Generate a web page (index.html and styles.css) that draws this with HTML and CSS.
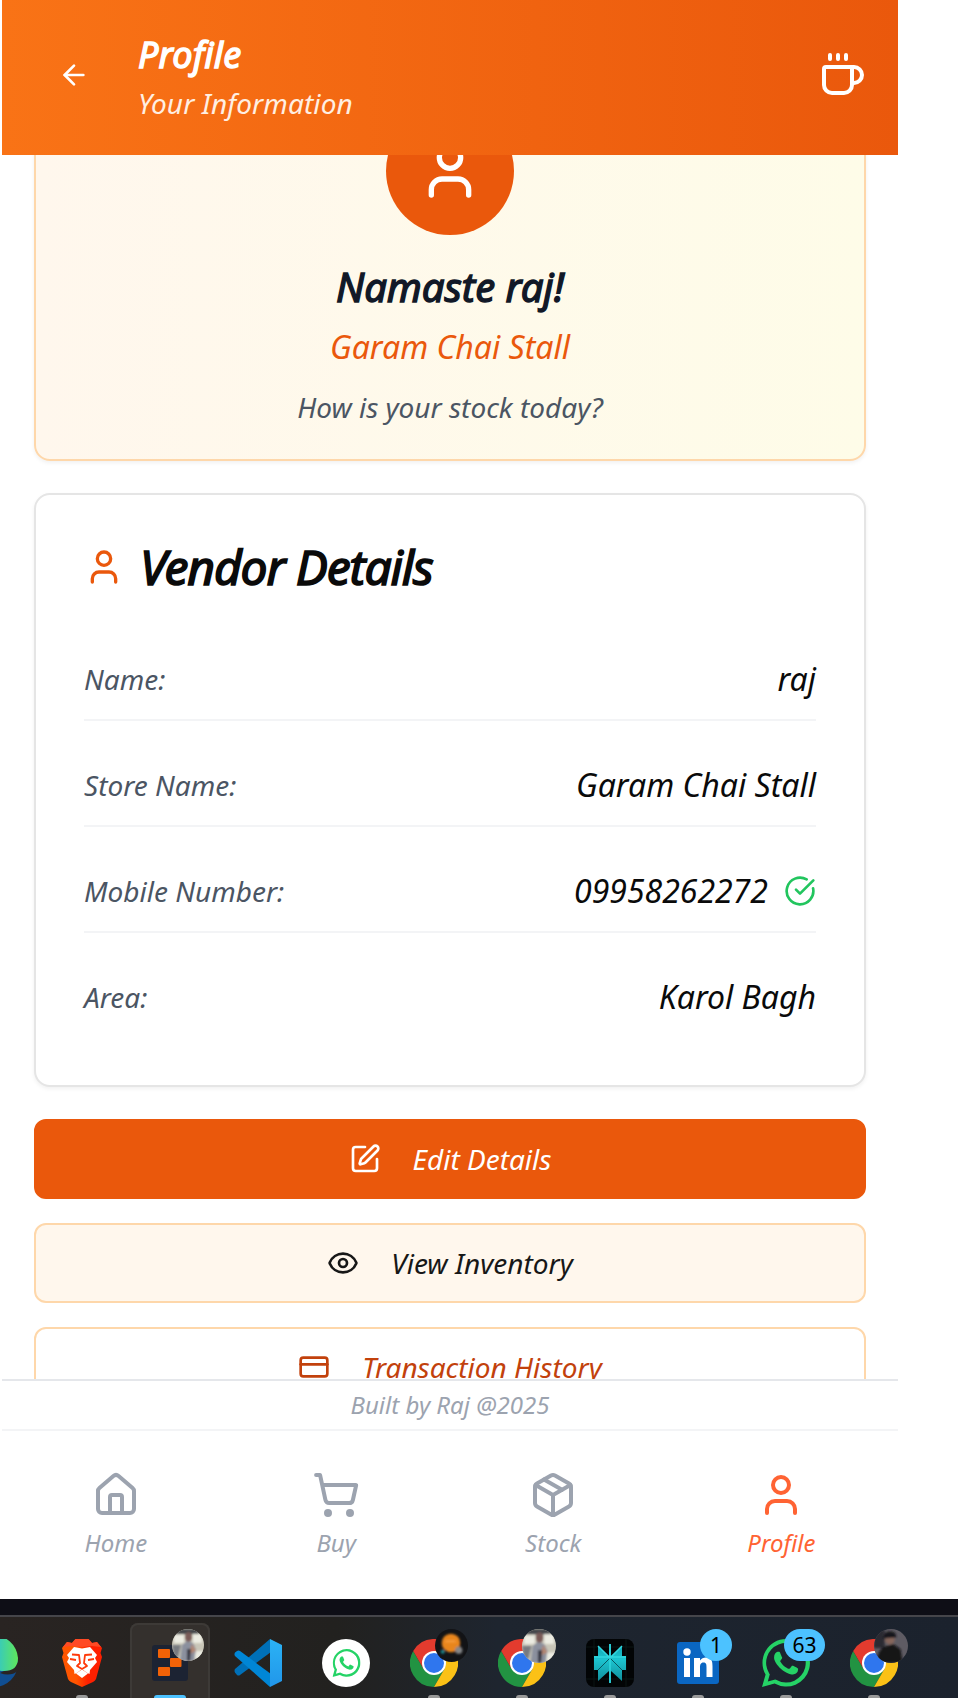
FILE: index.html
```html
<!DOCTYPE html>
<html lang="en">
<head>
<meta charset="utf-8">
<title>Profile</title>
<link rel="stylesheet" href="styles.css">
</head>
<body>
<div class="app">
  <header class="header">
    <button class="back" aria-label="Back"><svg class="icon i32" viewBox="0 0 24 24"><path d="m12 19-7-7 7-7"/><path d="M19 12H5"/></svg></button>
    <div class="heading">
      <h1 class="title">Profile</h1>
      <p class="subtitle">Your Information</p>
    </div>
    <svg class="icon i48" viewBox="0 0 24 24"><path d="M10 2v2"/><path d="M14 2v2"/><path d="M16 8a1 1 0 0 1 1 1v8a4 4 0 0 1-4 4H7a4 4 0 0 1-4-4V9a1 1 0 0 1 1-1h14a4 4 0 1 1 0 8h-1"/><path d="M6 2v2"/></svg>
  </header>

  <main class="content">
    <section class="card welcome">
      <div class="avatar"><svg class="icon i64" viewBox="0 0 24 24"><path d="M19 21v-2a4 4 0 0 0-4-4H9a4 4 0 0 0-4 4v2"/><circle cx="12" cy="7" r="4"/></svg></div>
      <h2 class="greeting">Namaste raj!</h2>
      <p class="store">Garam Chai Stall</p>
      <p class="question">How is your stock today?</p>
    </section>

    <section class="card details">
      <h3 class="details-title"><svg class="icon i40 orange" viewBox="0 0 24 24"><path d="M19 21v-2a4 4 0 0 0-4-4H9a4 4 0 0 0-4 4v2"/><circle cx="12" cy="7" r="4"/></svg><span class="details-name">Vendor Details</span></h3>
      <div class="rows">
        <div class="row"><span class="label">Name:</span><span class="value">raj</span></div>
        <div class="row"><span class="label">Store Name:</span><span class="value">Garam Chai Stall</span></div>
        <div class="row"><span class="label">Mobile Number:</span><span class="value"><span>09958262272</span><svg class="icon i32 green" viewBox="0 0 24 24"><path d="M21.801 10A10 10 0 1 1 17 3.335"/><path d="m9 11 3 3L22 4"/></svg></span></div>
        <div class="row"><span class="label">Area:</span><span class="value">Karol Bagh</span></div>
      </div>
    </section>

    <div class="actions">
      <button class="btn primary"><svg class="icon i32" viewBox="0 0 24 24"><path d="M12 3H5a2 2 0 0 0-2 2v14a2 2 0 0 0 2 2h14a2 2 0 0 0 2-2v-7"/><path d="M18.375 2.625a1 1 0 0 1 3 3l-9.013 9.014a2 2 0 0 1-.853.505l-2.873.84a.5.5 0 0 1-.62-.62l.84-2.873a2 2 0 0 1 .506-.852z"/></svg>Edit Details</button>
      <button class="btn tinted"><svg class="icon i32" viewBox="0 0 24 24"><path d="M2.062 12.348a1 1 0 0 1 0-.696 10.75 10.75 0 0 1 19.876 0 1 1 0 0 1 0 .696 10.75 10.75 0 0 1-19.876 0"/><circle cx="12" cy="12" r="3"/></svg>View Inventory</button>
      <button class="btn outline"><svg class="icon i32" viewBox="0 0 24 24"><rect width="20" height="14" x="2" y="5" rx="2"/><path d="M2 10h20"/></svg>Transaction History</button>
    </div>
  </main>

  <footer class="credit">Built by Raj @2025</footer>
  <nav class="nav">
    <a class="nav-item"><svg class="icon i48" viewBox="0 0 24 24"><path d="M15 21v-8a1 1 0 0 0-1-1h-4a1 1 0 0 0-1 1v8"/><path d="M3 10a2 2 0 0 1 .709-1.528l7-5.999a2 2 0 0 1 2.582 0l7 5.999A2 2 0 0 1 21 10v9a2 2 0 0 1-2 2H5a2 2 0 0 1-2-2z"/></svg>Home</a>
    <a class="nav-item"><svg class="icon i48" viewBox="0 0 24 24"><circle cx="8" cy="21" r="1"/><circle cx="19" cy="21" r="1"/><path d="M2.05 2.05h2l2.66 12.42a2 2 0 0 0 2 1.58h9.78a2 2 0 0 0 1.95-1.57l1.65-7.43H5.12"/></svg>Buy</a>
    <a class="nav-item"><svg class="icon i48" viewBox="0 0 24 24"><path d="M11 21.73a2 2 0 0 0 2 0l7-4A2 2 0 0 0 21 16V8a2 2 0 0 0-1-1.73l-7-4a2 2 0 0 0-2 0l-7 4A2 2 0 0 0 3 8v8a2 2 0 0 0 1 1.73z"/><path d="M12 22V12"/><path d="m3.3 7 8.7 5 8.7-5"/><path d="m7.5 4.27 9 5.15"/></svg>Stock</a>
    <a class="nav-item active"><svg class="icon i48" viewBox="0 0 24 24"><path d="M19 21v-2a4 4 0 0 0-4-4H9a4 4 0 0 0-4 4v2"/><circle cx="12" cy="7" r="4"/></svg>Profile</a>
  </nav>
</div>

<svg class="defs" width="0" height="0" aria-hidden="true">
  <defs>
    <linearGradient id="edge" x1="0" x2="1" y1="0" y2="0"><stop offset=".5" stop-color="#2fc3d2"/><stop offset="1" stop-color="#5fe85a"/></linearGradient>
    <linearGradient id="brave" x1="0" x2="1" y1="0" y2="0"><stop offset=".35" stop-color="#ff5500"/><stop offset=".65" stop-color="#ff2000"/></linearGradient>
    <linearGradient id="vs" x1="0" x2="0" y1="0" y2="1"><stop offset="0" stop-color="#2bb3f5"/><stop offset="1" stop-color="#2196ea"/></linearGradient>
    <linearGradient id="teal" x1="0" x2="0" y1="0" y2="1"><stop offset="0" stop-color="#12a3b0"/><stop offset=".4" stop-color="#1cc4d0"/><stop offset="1" stop-color="#0f8b98"/></linearGradient>
    <filter id="soft" x="-10%" y="-10%" width="120%" height="120%"><feGaussianBlur stdDeviation=".8"/></filter>
    <clipPath id="disc"><circle cx="16" cy="16" r="16"/></clipPath>
    <symbol id="chrome" viewBox="0 0 48 48">
      <path fill="#229342" d="M3.200 12A24 24 0 0 0 24 48l10.400-18H13.600z"/>
      <path fill="#fbc116" d="M24 12h20.800A24 24 0 0 1 24 48l10.400-18z"/>
      <path fill="#e33b2e" d="M13.600 30 3.200 12A24 24 0 0 1 44.800 12H24z"/>
      <circle cx="24" cy="24" r="12" fill="#fff"/><circle cx="24" cy="24" r="10" fill="#2f76ee"/>
    </symbol>
    <symbol id="photo" viewBox="0 0 32 32">
      <g clip-path="url(#disc)"><rect width="32" height="32" fill="#c9c6b8"/><g filter="url(#soft)">
        <path fill="#44474b" d="M3 0h24v5H3z"/><path fill="#ecece2" d="M2 6h10v8H2zM21 5h9v9h-9zM23 22h9v8h-9z"/>
        <path fill="#8b909e" d="M8 32 10 16l5-4 6 2 3 7-2 11z"/><ellipse cx="16.500" cy="8" rx="3.500" ry="5" fill="#795a56"/>
        <path fill="#b38672" d="m20 15 4 7-6 3v-4z"/><path fill="#343542" d="M15 20h4l-1 12h-3z"/><path fill="#777a80" d="M0 16h9l-3 12H2z"/>
      </g></g>
    </symbol>
    <symbol id="phone" viewBox="0 0 24 24"><path d="M17.500 14.400c-.3-.15-1.760-.87-2.030-.97-.28-.1-.47-.15-.67.15-.2.3-.77.970-.95 1.170-.17.200-.35.220-.65.070-.3-.15-1.250-.46-2.390-1.470a9 9 0 0 1-1.650-2.060c-.17-.3-.02-.46.130-.6.130-.14.300-.35.450-.53.150-.17.200-.3.300-.5.100-.2.050-.37-.03-.52-.07-.15-.67-1.610-.91-2.200-.24-.58-.49-.5-.67-.51h-.57c-.2 0-.52.070-.79.370-.27.300-1.040 1.020-1.040 2.480s1.070 2.880 1.210 3.070c.15.200 2.100 3.200 5.080 4.490 2.980 1.280 2.980.860 3.520.8.540-.05 1.760-.72 2-1.410.25-.7.250-1.290.18-1.420-.08-.12-.27-.2-.57-.35z"/><path fill-rule="evenodd" d="M12 0a11.900 11.900 0 0 0-10.200 17.800L0 24l6.300-1.700A11.900 11.900 0 1 0 12 0zm0 21.800a9.800 9.800 0 0 1-5-1.400l-.4-.2-3.700 1 1-3.600-.3-.4A9.900 9.900 0 1 1 12 21.800z"/></symbol>
  </defs>
</svg>

<div class="strip"></div>
<div class="taskbar">
  <div class="task"><svg class="app-icon" viewBox="0 0 48 48"><circle cx="24" cy="24" r="24" fill="#104e92"/><path fill="#292423" d="M30 34q10 4 18-2l2-10-12 8z"/><path fill="url(#edge)" d="M0 22a24 24 0 0 1 48-3c0 9-5 13-14 13-6 0-10-2-10-6z"/></svg></div>
  <div class="task"><svg class="app-icon" viewBox="0 0 48 48">
    <path fill="url(#brave)" d="M14 4 17.500 0h13L34 4l5-1 5 6-1.500 5 1.500 4-6 22q-1 2-3 3L24 48 13 43q-2-1-3-3L4 18l1.500-4L4 9l5-6z"/>
    <path fill="#ff4a25" d="M14 4 17.500 0h13L34 4l5-1 4 5-9-1-10 1-10-1-9 1 4-5z"/>
    <path fill="#fff" d="m16 8 8 1.500L32 8l7 8-2 3 2 4-7 8-.5 4-3-1.500L24 30l-4.500 3.500-3 1.500-.5-4-7-8 2-4-2-3z"/>
    <path fill="none" stroke="#ff3a0a" stroke-width="1.800" stroke-linejoin="round" d="m14 15.500 7 .5 1 8-3 3 5 3 5-3-3-3 1-8 7-.5M12 20l6 1M36 20l-6 1"/>
    <path fill="#fff" d="m24 30.500 6 4-6 4.500-6-4.500z"/></svg><i class="dot"></i></div>
  <div class="task current"><svg class="app-icon" viewBox="0 0 48 48"><rect x="6" y="6" width="36" height="36" rx="3" fill="#1c2333"/><g fill="#f26207"><rect x="12" y="10" width="12" height="9" rx="1"/><rect x="24" y="19" width="11.500" height="9" rx="1"/><rect x="12" y="28" width="12" height="9" rx="1"/></g></svg><svg class="user"><use href="#photo"/></svg><i class="dot wide"></i></div>
  <div class="task"><svg class="app-icon" viewBox="0 0 48 48"><path fill="#0070b8" d="m36 0 1 13L6 36q-1.500 1-3 0l-2-2.500q-1-2 0-3.500z"/><path fill="#0086d6" d="M1 17q-1-2 0-3.500L3 12q1.500-1 3 0l31 23-1 13z"/><path fill="url(#vs)" d="m36 0 12 6v36l-12 6z"/></svg></div>
  <div class="task"><svg class="app-icon" viewBox="0 0 48 48"><circle cx="24" cy="24" r="24" fill="#fff"/><use href="#phone" x="10.500" y="10" width="28" height="28" fill="#25d366"/></svg></div>
  <div class="task"><svg class="app-icon" viewBox="0 0 48 48"><use href="#chrome"/></svg><svg class="user planet" viewBox="0 0 32 32"><circle cx="16" cy="16" r="16" fill="#121316"/><g filter="url(#soft)"><circle cx="15.500" cy="13.500" r="9" fill="#e8851f"/><path stroke="#f79c3a" stroke-width="2" d="M10 12h10"/><circle cx="23" cy="20.500" r="3.500" fill="#848586"/><circle cx="7.500" cy="22" r="2" fill="#168b91"/></g></svg><i class="dot"></i></div>
  <div class="task"><svg class="app-icon" viewBox="0 0 48 48"><use href="#chrome"/></svg><svg class="user large"><use href="#photo"/></svg><i class="dot"></i></div>
  <div class="task"><svg class="app-icon" viewBox="0 0 48 48"><rect width="48" height="48" rx="8" fill="#020405"/><path fill="none" stroke="#0a1415" d="M0 8h48M0 40h48M8 0v48M40 0v48"/><path fill="url(#teal)" d="M12 7 23 17V5h2v12L36 7v10h4v14h-4v11L25 32v12h-2V32L12 42V31H8V17h4z"/><path fill="none" stroke="#075861" stroke-width="1" d="M24 19 12 31M24 19l12 12"/><path fill="none" stroke="#31d7e0" stroke-width="1.500" d="M24 5v39M8 18h32M12 7l12 12L36 7"/></svg><i class="dot"></i></div>
  <div class="task"><svg class="app-icon" viewBox="0 0 48 48"><rect x="3" y="3" width="42" height="42" rx="3" fill="#0a66c2"/><circle cx="13" cy="13" r="3.700" fill="#fff"/><path fill="#fff" d="M10 19h6v19h-6zM20 19h6v2.600q2-3 6-3c6 0 6.500 4 6.500 9V38h-6v-9.500c0-2.500 0-5-3-5s-3.500 2.500-3.500 5V38h-6z"/></svg><span class="badge">1</span><i class="dot"></i></div>
  <div class="task"><svg class="app-icon" viewBox="0 0 48 48"><use href="#phone" width="48" height="48" fill="#25d366"/></svg><span class="badge double">63</span><i class="dot"></i></div>
  <div class="task"><svg class="app-icon" viewBox="0 0 48 48"><use href="#chrome"/></svg><svg class="user large" viewBox="0 0 32 32"><g clip-path="url(#disc)"><rect width="32" height="32" fill="#5e5b63"/><g filter="url(#soft)"><path fill="#292a31" d="M0 0h10v18H0z"/><path fill="#121216" d="M3 32q0-14 9-16l6-2 7 5 2 13z"/><circle cx="15" cy="10" r="4.500" fill="#86665c"/><path fill="#19161a" d="M9 9q0-7 6-7t6 6z"/></g></g></svg><i class="dot"></i></div>
</div>
</body>
</html>
```
FILE: styles.css
```css
* { box-sizing: border-box; margin: 0; padding: 0; }
body { width: 958px; height: 1698px; overflow: hidden; background: #fff; color: #0a0a0a; font-family: "Noto Sans", sans-serif; font-style: italic; font-size: 28px; }
button { font: inherit; color: inherit; background: none; border: 0; }

.icon { display: block; flex: none; fill: none; stroke: currentColor; stroke-width: 2; stroke-linecap: round; stroke-linejoin: round; }
.i32 { width: 32px; height: 32px; }
.i40 { width: 40px; height: 40px; }
.i48 { width: 48px; height: 48px; }
.i64 { width: 64px; height: 64px; }
.orange { color: #ea580c; }
.green { color: #22c55e; }

.app { display: flex; flex-direction: column; width: 896px; height: 1599px; margin-left: 2px; }

.header { display: flex; align-items: center; flex: none; height: 155px; padding: 27px 32px 32px; color: #fff; background: linear-gradient(to right, #f97316, #ea580c); }
.back { padding: 16px 24px; margin-right: 24px; }
.heading { flex: 1; }
.title { padding-top: 1px; font-size: 36px; line-height: 42px; font-weight: 400; letter-spacing: .15px; -webkit-text-stroke: 1.4px currentColor; }
.subtitle { margin-top: 13px; line-height: 28px; letter-spacing: .1px; color: #ffefe2; }

.content { flex: 1; min-height: 0; overflow: hidden; padding: 0 32px; }
.card { border: 2px solid #e5e5e5; border-radius: 16px; background: #fff; box-shadow: 0 2px 4px rgba(0, 0, 0, .06); }
.welcome { display: flex; flex-direction: column; align-items: center; margin-top: -98px; padding: 48px 32px 32px; border-color: #fed7aa; background: linear-gradient(to right, #fff7ed, #fefce8); }
.avatar { display: flex; align-items: center; justify-content: center; width: 128px; height: 128px; margin-bottom: 24px; border-radius: 50%; color: #fff; background: #ea580c; }
.greeting { font-size: 40px; line-height: 56px; font-weight: 400; -webkit-text-stroke: 1.4px currentColor; color: #111827; }
.store { margin-top: 4px; font-size: 32px; line-height: 56px; color: #ea580c; }
.question { margin-top: 12px; line-height: 40px; color: #4b5563; }

.details { margin-top: 32px; padding: 48px; }
.details-title { display: flex; align-items: center; gap: 16px; height: 48px; margin-bottom: 48px; font-size: 48px; line-height: 48px; font-weight: 400; letter-spacing: -1.120px; }
.details-name { -webkit-text-stroke: 1.6px currentColor; }
.rows { display: flex; flex-direction: column; gap: 24px; }
.row { display: flex; align-items: center; justify-content: space-between; height: 82px; border-bottom: 2px solid #f3f4f6; }
.row:last-child { height: 80px; border-bottom: 0; }
.label { color: #4b5563; }
.value { display: flex; align-items: center; gap: 16px; font-size: 32px; line-height: 44px; }

.actions { display: flex; flex-direction: column; gap: 24px; margin-top: 32px; }
.btn { display: flex; align-items: center; justify-content: center; flex: none; gap: 32px; height: 80px; border: 2px solid #fed7aa; border-radius: 12px; line-height: 40px; }
.primary { border-color: #ea580c; color: #fff; background: #ea580c; }
.tinted { color: #171717; background: #fff7ed; }
.outline { color: #c2410c; background: #fff; }

.credit { flex: none; height: 52px; border-top: 2px solid #e5e7eb; border-bottom: 2px solid #f3f4f6; text-align: center; font-size: 24px; line-height: 48px; color: #9ca3af; }
.nav { display: flex; justify-content: space-around; flex: none; height: 168px; padding: 40px 1px 0 0; }
.nav-item { display: flex; flex-direction: column; align-items: center; gap: 8px; font-size: 24px; line-height: 32px; color: #9ca3af; }
.active { margin: 0 -1px 0 1px; color: #ff6333; }

.defs { display: block; width: 0; height: 0; }
.strip { height: 16px; background: #0e0e16; }
.taskbar { display: flex; gap: 8px; height: 83px; padding-top: 6px; margin: 0; border-top: 2px solid #45454a; background: linear-gradient(to right, #292422, #22211f 35%, #1e252f 52%, #1b222d); overflow: hidden; }
.task { position: relative; flex: none; width: 80px; height: 90px; padding: 16px; border-radius: 8px; }
.task:first-child { margin-left: -46px; }
.current { background: #34302d; box-shadow: inset 0 0 0 2px #3d3a37; }
.app-icon { display: block; width: 48px; height: 48px; }
.user { position: absolute; left: 42px; top: 6px; width: 32px; height: 32px; }
.large { width: 34px; height: 34px; left: 40px; }
.planet { width: 33px; height: 33px; left: 41px; }
.badge { position: absolute; left: 42px; top: 6px; width: 32px; height: 32px; border-radius: 16px; background: #4cc2ff; color: #000; font-style: normal; font-size: 21px; line-height: 32px; text-align: center; }
.double { left: 38px; width: 41px; }
.dot { position: absolute; left: 34px; top: 72px; width: 12px; height: 6px; border-radius: 3px; background: #999; }
.wide { left: 24px; width: 32px; background: #4cc2ff; }
```
